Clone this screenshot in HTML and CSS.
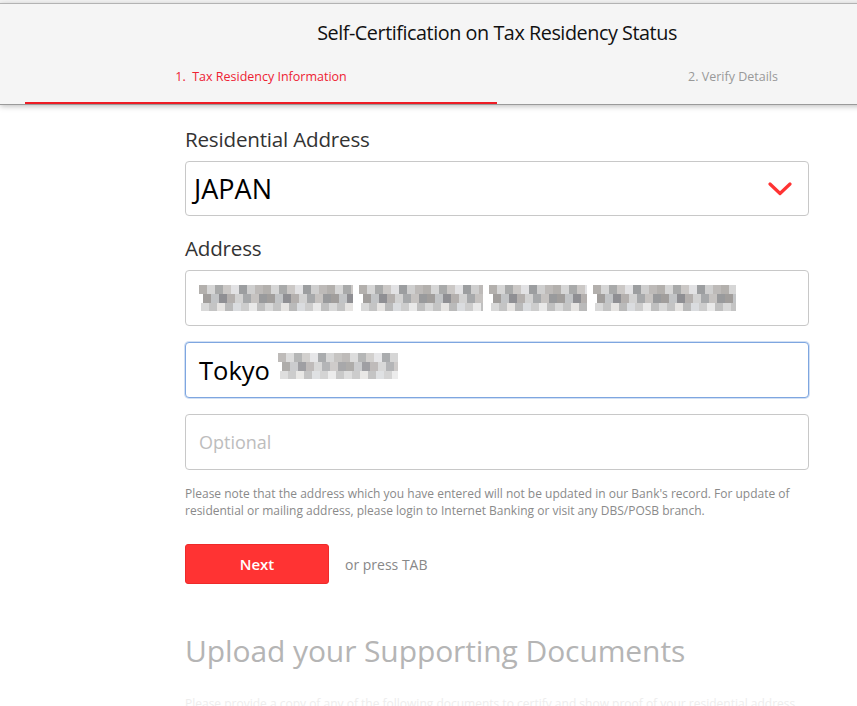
FILE: index.html
```html
<!DOCTYPE html>
<html lang="en">
<head>
<meta charset="utf-8">
<title>Self-Certification on Tax Residency Status</title>
<link rel="stylesheet" href="styles.css">
</head>
<body>
<div class="page">
  <div class="chrome"></div>
  <header class="header">
    <h1 class="title">Self-Certification on Tax Residency Status</h1>
    <nav class="tabs">
      <div class="tab tab-active">1.&nbsp; Tax Residency Information</div>
      <div class="tab">2. Verify Details</div>
    </nav>
  </header>
  <main class="form">
    <label class="label">Residential Address</label>
    <div class="field field-select">
      <span class="value value-select">JAPAN</span>
      <svg class="chevron" width="24" height="14" viewBox="0 0 24 14"><path d="M2 2 L12 11.5 L22 2" fill="none" stroke="#ff3333" stroke-width="3.2" stroke-linecap="round" stroke-linejoin="round"/></svg>
    </div>
    <label class="label label-address">Address</label>
    <div class="inputs">
      <div class="field">
        <div class="mosaic">
          <span class="blk w1"></span><span class="blk w2"></span><span class="blk w3"></span><span class="blk w4"></span>
        </div>
      </div>
      <div class="field field-focus">
        <span class="value">Tokyo</span>
        <span class="blk w5"></span>
      </div>
      <div class="field">
        <span class="placeholder">Optional</span>
      </div>
    </div>
    <p class="note">Please note that the address which you have entered will not be updated in our Bank's record. For update of residential or mailing address, please login to Internet Banking or visit any DBS/POSB branch.</p>
    <div class="actions">
      <button class="btn">Next</button>
      <span class="hint">or press TAB</span>
    </div>
    <h2 class="upload">Upload your Supporting Documents</h2>
    <p class="faint">Please provide a copy of any of the following documents to certify and show proof of your residential address.</p>
  </main>
</div>
</body>
</html>
```

FILE: styles.css
```css
html, body {
  margin: 0;
  padding: 0;
  background: #ffffff;
  overflow: hidden;
}
body {
  font-family: "Open Sans", "Noto Sans", "Liberation Sans", sans-serif;
  color: #333;
}
.page {
  width: 994px;
}
.chrome {
  height: 3px;
  background: #f3f3f3;
}
.header {
  background: #f5f5f5;
  border-top: 1px solid #b3b3b3;
  padding-top: 15px;
  position: relative;
  z-index: 2;
  box-shadow: 0 1px 0 #9a9a9a, 0 2px 6px rgba(0,0,0,0.28);
}
.title {
  margin: 0;
  text-align: center;
  font-size: 19.8px;
  line-height: 28px;
  font-weight: 400;
  color: #111;
  letter-spacing: -0.45px;
}
.tabs {
  display: flex;
  margin: 20px 25px 0;
}
.tab {
  flex: 1;
  text-align: center;
  font-size: 12.5px;
  line-height: 20px;
  color: #999;
  padding-bottom: 15px;
  border-bottom: 2px solid transparent;
}
.tab-active {
  color: #ee2233;
  border-bottom-color: #ee1c25;
}
.form {
  width: 624px;
  margin: 0 auto;
  padding-top: 21px;
  display: flex;
  flex-direction: column;
}
.label {
  font-size: 20.6px;
  line-height: 28px;
  color: #333;
  margin-bottom: 8px;
  letter-spacing: -0.2px;
}
.label-address {
  margin-top: 18px;
  margin-bottom: 8px;
}
.inputs {
  display: flex;
  flex-direction: column;
  gap: 16px;
}
.field {
  box-sizing: border-box;
  height: 56px;
  border: 1px solid #c8c8c8;
  border-radius: 4px;
  display: flex;
  align-items: center;
  padding: 0 13px;
  background: #fff;
}
.field-select {
  height: 55px;
  justify-content: space-between;
  padding-left: 8px;
  padding-right: 16px;
}
.field-focus {
  border-color: #7ea6e0;
  box-shadow: 0 0 0 1px rgba(126,166,224,0.35);
}
.value {
  font-size: 25.5px;
  color: #000;
}
.value-select {
  font-size: 27px;
}
.placeholder {
  font-size: 18px;
  color: #bdbdbd;
}
.mosaic {
  display: flex;
  gap: 6px;
  height: 26px;
}
.blk {
  display: block;
  height: 26px;
  background:
    repeating-linear-gradient(90deg, #b3b0ad 0 8px, #d6d6d6 8px 16px, #a9aaaa 16px 24px, #cbc8c6 24px 32px, #e2e2e4 32px 40px, #9c9ea0 40px 48px, #cfcfcf 48px 56px, #bdbab8 56px 64px) 0 0 / 100% 9px no-repeat,
    repeating-linear-gradient(90deg, #a19e9c 0 8px, #c2c4c6 8px 16px, #8f8f93 16px 24px, #b4b0ae 24px 32px, #d2d2d2 32px 40px, #a7a9ab 40px 48px, #c6c3c1 48px 56px, #999a9c 56px 64px) 4px 9px / 100% 9px no-repeat,
    repeating-linear-gradient(90deg, #d9d9d9 0 8px, #c4c4c4 8px 16px, #e6e4e2 16px 24px, #bababa 24px 32px, #dadcdf 32px 40px, #cdcdcd 40px 48px, #e9e9e9 48px 56px, #c0c0c0 56px 64px) 2px 18px / 100% 8px no-repeat;
}
.w1 { width: 154px; }
.w2 { width: 124px; }
.w3 { width: 98px; }
.w4 { width: 143px; }
.w5 { width: 120px; height: 34px; margin-left: 8px; opacity: 0.85; }
.note {
  margin: 15px 0 0;
  font-size: 12px;
  line-height: 17px;
  color: #8a8a8a;
}
.actions {
  margin-top: 25px;
  display: flex;
  align-items: center;
  gap: 16px;
}
.btn {
  width: 144px;
  height: 40px;
  border: 1px solid #ee2a2a;
  border-radius: 3px;
  background: #ff3333;
  color: #fff;
  font-family: inherit;
  font-size: 15px;
  font-weight: 600;
  padding: 0;
}
.hint {
  font-size: 14px;
  color: #888;
}
.upload {
  margin: 47px 0 0;
  font-size: 30px;
  line-height: 40px;
  font-weight: 400;
  color: #b5b5b5;
  letter-spacing: -0.1px;
}
.faint {
  margin: 24px 0 0;
  font-size: 12px;
  line-height: 17px;
  color: #ededed;
}
```
